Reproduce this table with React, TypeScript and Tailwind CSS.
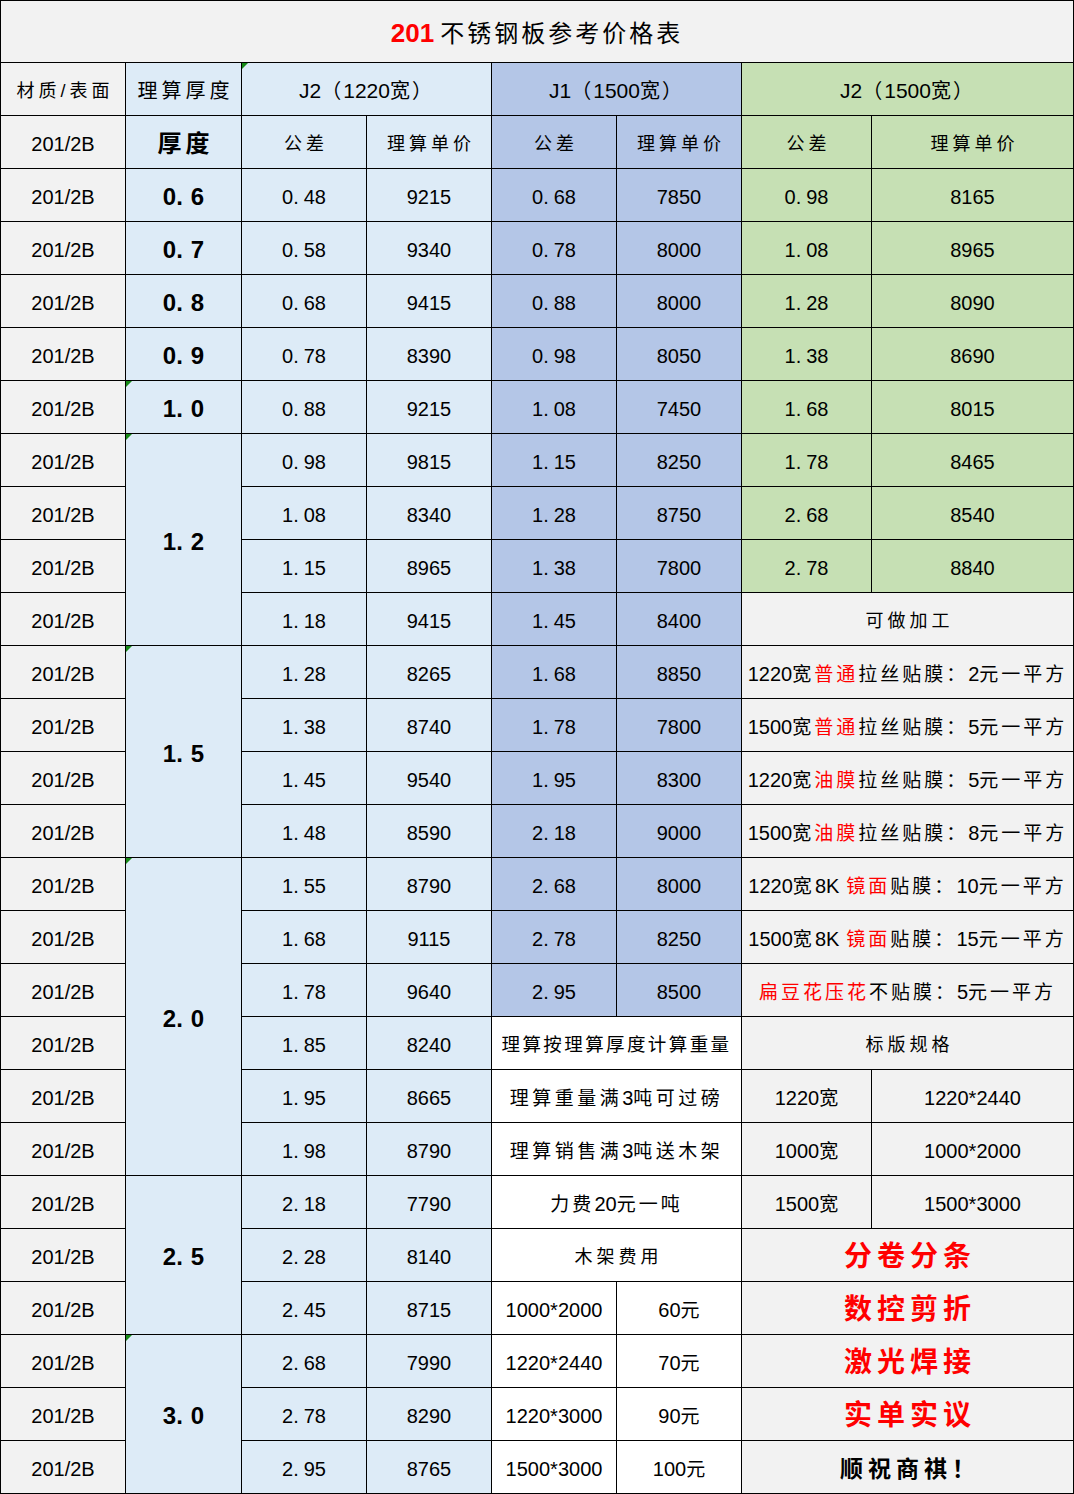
import React from "react";

const GRAY = "bg-[#f2f2f2]";
const LB = "bg-[#ddebf7]";
const BL = "bg-[#b4c6e7]";
const GR = "bg-[#c6e0b4]";
const WH = "bg-white";

function Tri() {
  return (
    <span className="absolute left-0 top-0 h-0 w-0 border-t-[6px] border-r-[6px] border-t-[#168a16] border-r-transparent" />
  );
}

function C({
  children,
  bg,
  cls = "",
  tri = false,
}: {
  children?: React.ReactNode;
  bg: string;
  cls?: string;
  tri?: boolean;
}) {
  return (
    <div
      className={`relative flex items-center justify-center border-r border-b border-black pt-[4px] text-[20px] text-black whitespace-nowrap ${bg} ${cls}`}
    >
      {tri && <Tri />}
      {children}
    </div>
  );
}

function Num({ v }: { v: string }) {
  const [a, b] = v.split(".");
  return (
    <span>
      {a}.<span className="pl-[5px]">{b}</span>
    </span>
  );
}

function Zh({ children }: { children: React.ReactNode }) {
  return <span className="text-[18px] tracking-[4px] pl-[4px]">{children}</span>;
}

function Thick({ v }: { v: string }) {
  const [a, b] = v.split(".");
  return (
    <span className="text-[24px] font-bold">
      {a}.<span className="pl-[8px]">{b}</span>
    </span>
  );
}

function mix(s: string, red = false, zhTrack = "tracking-[3px]", asciiSize = "text-[20px]", zhSize = "text-[19px]") {
  const parts = s.split(/([\x00-\x7f]+)/).filter((p) => p.length > 0);
  return parts.map((p, i) => {
    const ascii = /^[\x00-\x7f]+$/.test(p);
    const trailing = ascii && p.endsWith(" ");
    return (
      <span
        key={i}
        className={`${ascii ? `${asciiSize} tracking-normal` : `${zhSize} ${zhTrack}`} ${red ? "text-[#ff0000]" : ""} ${trailing ? "mr-[7px]" : ""}`}
      >
        {ascii ? p.trimEnd() : p}
      </span>
    );
  });
}

function Film({ segs }: { segs: [string, boolean][] }) {
  return (
    <span className="flex items-baseline">
      {segs.map(([s, r], i) => (
        <React.Fragment key={i}>{mix(s, r)}</React.Fragment>
      ))}
    </span>
  );
}

function Big({ children, red = true }: { children: React.ReactNode; red?: boolean }) {
  return (
    <span
      className={`font-bold tracking-[5px] pl-[5px] ${red ? "text-[28px] text-[#ff0000]" : "text-[23px] text-black"}`}
    >
      {children}
    </span>
  );
}

const first = [
  ["0.6", "0.48", "9215", "0.68", "7850", "0.98", "8165"],
  ["0.7", "0.58", "9340", "0.78", "8000", "1.08", "8965"],
  ["0.8", "0.68", "9415", "0.88", "8000", "1.28", "8090"],
  ["0.9", "0.78", "8390", "0.98", "8050", "1.38", "8690"],
  ["1.0", "0.88", "9215", "1.08", "7450", "1.68", "8015"],
];

export default function App() {
  const label = (
    <C bg={GRAY}>
      <span>201/2B</span>
    </C>
  );
  const hdr = (s: string) => (
    <span className="flex items-baseline">{mix(s, false, "tracking-[2px]", "text-[21px]", "text-[20px]")}</span>
  );
  return (
    <div
      className="w-[1074px] border-l border-t border-black"
      style={{ fontFamily: '"Liberation Sans", "Noto Sans CJK SC", sans-serif' }}
    >
      <div className="grid grid-cols-[125px_116px_125px_125px_125px_125px_130px_202px] grid-rows-[62px_53px_repeat(26,53px)]">
        {/* title */}
        <C bg={GRAY} cls="col-span-8">
          <span className="text-[26px] font-bold text-[#ff0000]">201</span>
          <span className="text-[24px] tracking-[3px] pl-[6px]">不锈钢板参考价格表</span>
        </C>
        {/* header */}
        <C bg={GRAY}>
          <span className="tracking-[4px] pl-[4px] text-[18px]">材质/表面</span>
        </C>
        <C bg={LB}>
          <span className="tracking-[4px] pl-[4px] text-[20px]">理算厚度</span>
        </C>
        <C bg={LB} cls="col-span-2" tri>{hdr("J2（1220宽）")}</C>
        <C bg={BL} cls="col-span-2">{hdr("J1（1500宽）")}</C>
        <C bg={GR} cls="col-span-2">{hdr("J2（1500宽）")}</C>
        {/* row 0 */}
        {label}
        <C bg={LB}>
          <span className="text-[24px] font-bold tracking-[4px] pl-[4px]">厚度</span>
        </C>
        <C bg={LB}><Zh>公差</Zh></C>
        <C bg={LB}><Zh>理算单价</Zh></C>
        <C bg={BL}><Zh>公差</Zh></C>
        <C bg={BL}><Zh>理算单价</Zh></C>
        <C bg={GR}><Zh>公差</Zh></C>
        <C bg={GR}><Zh>理算单价</Zh></C>
        {/* rows 1-5 */}
        {first.map((r, i) => (
          <React.Fragment key={i}>
            {label}
            <C bg={LB} tri={i === 4}><Thick v={r[0]} /></C>
            <C bg={LB}><Num v={r[1]} /></C>
            <C bg={LB}>{r[2]}</C>
            <C bg={BL}><Num v={r[3]} /></C>
            <C bg={BL}>{r[4]}</C>
            <C bg={GR}><Num v={r[5]} /></C>
            <C bg={GR}>{r[6]}</C>
          </React.Fragment>
        ))}
        {/* 1.2 block */}
        {label}
        <C bg={LB} cls="row-span-4" tri><Thick v="1.2" /></C>
        <C bg={LB}><Num v="0.98" /></C>
        <C bg={LB}>9815</C>
        <C bg={BL}><Num v="1.15" /></C>
        <C bg={BL}>8250</C>
        <C bg={GR}><Num v="1.78" /></C>
        <C bg={GR}>8465</C>

        {label}
        <C bg={LB}><Num v="1.08" /></C>
        <C bg={LB}>8340</C>
        <C bg={BL}><Num v="1.28" /></C>
        <C bg={BL}>8750</C>
        <C bg={GR}><Num v="2.68" /></C>
        <C bg={GR}>8540</C>

        {label}
        <C bg={LB}><Num v="1.15" /></C>
        <C bg={LB}>8965</C>
        <C bg={BL}><Num v="1.38" /></C>
        <C bg={BL}>7800</C>
        <C bg={GR}><Num v="2.78" /></C>
        <C bg={GR}>8840</C>

        {label}
        <C bg={LB}><Num v="1.18" /></C>
        <C bg={LB}>9415</C>
        <C bg={BL}><Num v="1.45" /></C>
        <C bg={BL}>8400</C>
        <C bg={GRAY} cls="col-span-2"><Zh>可做加工</Zh></C>

        {/* 1.5 block */}
        {label}
        <C bg={LB} cls="row-span-4" tri><Thick v="1.5" /></C>
        <C bg={LB}><Num v="1.28" /></C>
        <C bg={LB}>8265</C>
        <C bg={BL}><Num v="1.68" /></C>
        <C bg={BL}>8850</C>
        <C bg={GRAY} cls="col-span-2"><Film segs={[["1220宽", false], ["普通", true], ["拉丝贴膜：2元一平方", false]]} /></C>

        {label}
        <C bg={LB}><Num v="1.38" /></C>
        <C bg={LB}>8740</C>
        <C bg={BL}><Num v="1.78" /></C>
        <C bg={BL}>7800</C>
        <C bg={GRAY} cls="col-span-2"><Film segs={[["1500宽", false], ["普通", true], ["拉丝贴膜：5元一平方", false]]} /></C>

        {label}
        <C bg={LB}><Num v="1.45" /></C>
        <C bg={LB}>9540</C>
        <C bg={BL}><Num v="1.95" /></C>
        <C bg={BL}>8300</C>
        <C bg={GRAY} cls="col-span-2"><Film segs={[["1220宽", false], ["油膜", true], ["拉丝贴膜：5元一平方", false]]} /></C>

        {label}
        <C bg={LB}><Num v="1.48" /></C>
        <C bg={LB}>8590</C>
        <C bg={BL}><Num v="2.18" /></C>
        <C bg={BL}>9000</C>
        <C bg={GRAY} cls="col-span-2"><Film segs={[["1500宽", false], ["油膜", true], ["拉丝贴膜：8元一平方", false]]} /></C>

        {/* 2.0 block */}
        {label}
        <C bg={LB} cls="row-span-6" tri><Thick v="2.0" /></C>
        <C bg={LB}><Num v="1.55" /></C>
        <C bg={LB}>8790</C>
        <C bg={BL}><Num v="2.68" /></C>
        <C bg={BL}>8000</C>
        <C bg={GRAY} cls="col-span-2"><Film segs={[["1220宽8K ", false], ["镜面", true], ["贴膜：10元一平方", false]]} /></C>

        {label}
        <C bg={LB}><Num v="1.68" /></C>
        <C bg={LB}>9115</C>
        <C bg={BL}><Num v="2.78" /></C>
        <C bg={BL}>8250</C>
        <C bg={GRAY} cls="col-span-2"><Film segs={[["1500宽8K ", false], ["镜面", true], ["贴膜：15元一平方", false]]} /></C>

        {label}
        <C bg={LB}><Num v="1.78" /></C>
        <C bg={LB}>9640</C>
        <C bg={BL}><Num v="2.95" /></C>
        <C bg={BL}>8500</C>
        <C bg={GRAY} cls="col-span-2"><Film segs={[["扁豆花压花", true], ["不贴膜：5元一平方", false]]} /></C>

        {label}
        <C bg={LB}><Num v="1.85" /></C>
        <C bg={LB}>8240</C>
        <C bg={WH} cls="col-span-2"><span className="tracking-[2.4px] text-[18.5px]">理算按理算厚度计算重量</span></C>
        <C bg={GRAY} cls="col-span-2"><Zh>标版规格</Zh></C>

        {label}
        <C bg={LB}><Num v="1.95" /></C>
        <C bg={LB}>8665</C>
        <C bg={WH} cls="col-span-2"><span className="flex items-baseline">{mix("理算重量满3吨可过磅", false, "tracking-[3.5px]")}</span></C>
        <C bg={GRAY}><span className="flex items-baseline">{mix("1220宽", false, "tracking-normal")}</span></C>
        <C bg={GRAY}>1220*2440</C>

        {label}
        <C bg={LB}><Num v="1.98" /></C>
        <C bg={LB}>8790</C>
        <C bg={WH} cls="col-span-2"><span className="flex items-baseline">{mix("理算销售满3吨送木架", false, "tracking-[3.5px]")}</span></C>
        <C bg={GRAY}><span className="flex items-baseline">{mix("1000宽", false, "tracking-normal")}</span></C>
        <C bg={GRAY}>1000*2000</C>

        {/* 2.5 block */}
        {label}
        <C bg={LB} cls="row-span-3"><Thick v="2.5" /></C>
        <C bg={LB}><Num v="2.18" /></C>
        <C bg={LB}>7790</C>
        <C bg={WH} cls="col-span-2"><span className="flex items-baseline">{mix("力费20元一吨", false, "tracking-[3px]")}</span></C>
        <C bg={GRAY}><span className="flex items-baseline">{mix("1500宽", false, "tracking-normal")}</span></C>
        <C bg={GRAY}>1500*3000</C>

        {label}
        <C bg={LB}><Num v="2.28" /></C>
        <C bg={LB}>8140</C>
        <C bg={WH} cls="col-span-2"><Zh>木架费用</Zh></C>
        <C bg={GRAY} cls="col-span-2"><Big>分卷分条</Big></C>

        {label}
        <C bg={LB}><Num v="2.45" /></C>
        <C bg={LB}>8715</C>
        <C bg={WH}>1000*2000</C>
        <C bg={WH}><span className="flex items-baseline">{mix("60元", false, "tracking-normal")}</span></C>
        <C bg={GRAY} cls="col-span-2"><Big>数控剪折</Big></C>

        {/* 3.0 block */}
        {label}
        <C bg={LB} cls="row-span-3" tri><Thick v="3.0" /></C>
        <C bg={LB}><Num v="2.68" /></C>
        <C bg={LB}>7990</C>
        <C bg={WH}>1220*2440</C>
        <C bg={WH}><span className="flex items-baseline">{mix("70元", false, "tracking-normal")}</span></C>
        <C bg={GRAY} cls="col-span-2"><Big>激光焊接</Big></C>

        {label}
        <C bg={LB}><Num v="2.78" /></C>
        <C bg={LB}>8290</C>
        <C bg={WH}>1220*3000</C>
        <C bg={WH}><span className="flex items-baseline">{mix("90元", false, "tracking-normal")}</span></C>
        <C bg={GRAY} cls="col-span-2"><Big>实单实议</Big></C>

        {label}
        <C bg={LB}><Num v="2.95" /></C>
        <C bg={LB}>8765</C>
        <C bg={WH}>1500*3000</C>
        <C bg={WH}><span className="flex items-baseline">{mix("100元", false, "tracking-normal")}</span></C>
        <C bg={GRAY} cls="col-span-2"><Big red={false}>顺祝商祺！</Big></C>
      </div>
    </div>
  );
}
